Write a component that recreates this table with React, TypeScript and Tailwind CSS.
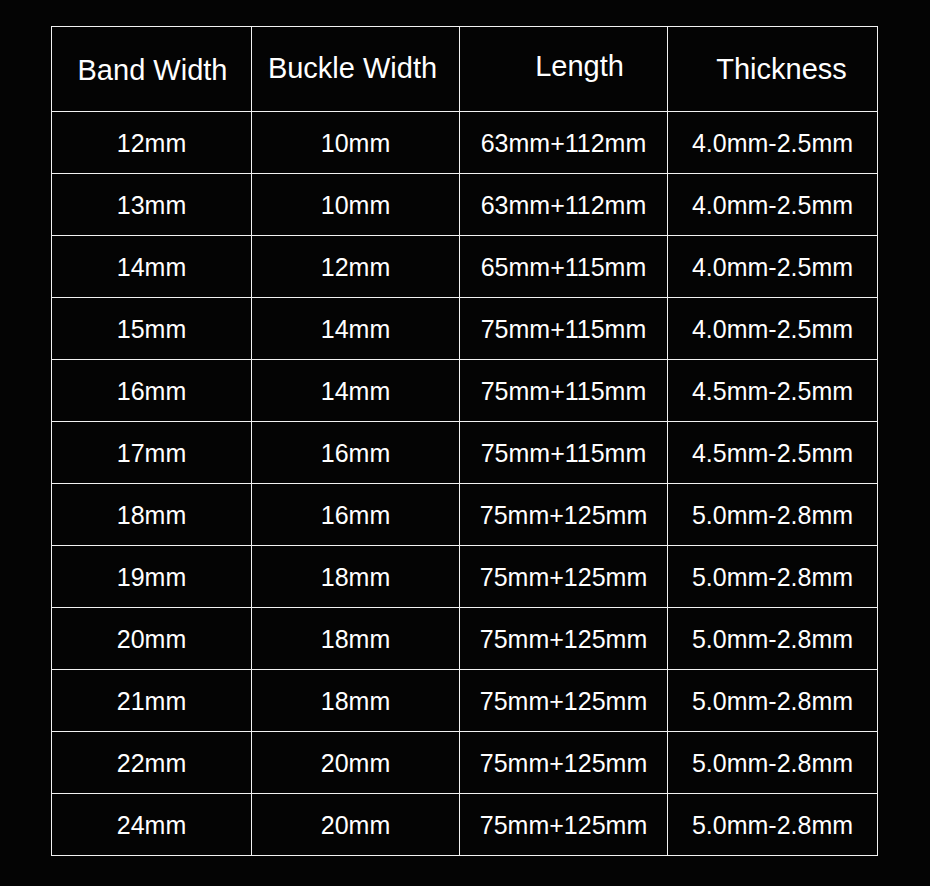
import React from "react";

const rows: [string, string, string, string][] = [
  ["12mm", "10mm", "63mm+112mm", "4.0mm-2.5mm"],
  ["13mm", "10mm", "63mm+112mm", "4.0mm-2.5mm"],
  ["14mm", "12mm", "65mm+115mm", "4.0mm-2.5mm"],
  ["15mm", "14mm", "75mm+115mm", "4.0mm-2.5mm"],
  ["16mm", "14mm", "75mm+115mm", "4.5mm-2.5mm"],
  ["17mm", "16mm", "75mm+115mm", "4.5mm-2.5mm"],
  ["18mm", "16mm", "75mm+125mm", "5.0mm-2.8mm"],
  ["19mm", "18mm", "75mm+125mm", "5.0mm-2.8mm"],
  ["20mm", "18mm", "75mm+125mm", "5.0mm-2.8mm"],
  ["21mm", "18mm", "75mm+125mm", "5.0mm-2.8mm"],
  ["22mm", "20mm", "75mm+125mm", "5.0mm-2.8mm"],
  ["24mm", "20mm", "75mm+125mm", "5.0mm-2.8mm"],
];

const headerCell =
  "h-[85px] flex items-center justify-center border-r border-b border-[#f2f2f2] text-[29px] text-white";
const dataCell =
  "h-[62px] flex items-center justify-center border-r border-b border-[#f2f2f2] text-[25px] text-white";

export default function App() {
  return (
    <div
      className="w-[930px] h-[886px] bg-[#040404] pt-[26px] pl-[51px]"
      style={{ fontFamily: '"Liberation Sans", Arial, sans-serif' }}
    >
      <div className="grid grid-cols-[200px_208px_208px_210px] w-[827px] border-l border-t border-[#f2f2f2]">
        <div className={`${headerCell} pl-[2px] pt-[3px]`}>Band Width</div>
        <div className={`${headerCell} pr-[6px]`}>Buckle Width</div>
        <div className={`${headerCell} pl-[32px] pb-[4px]`}>Length</div>
        <div className={`${headerCell} pl-[18px] pt-[2px]`}>Thickness</div>
        {rows.map((r, i) => (
          <React.Fragment key={i}>
            {r.map((c, j) => (
              <div key={j} className={`${dataCell} pt-[3px]`}>
                {c}
              </div>
            ))}
          </React.Fragment>
        ))}
      </div>
    </div>
  );
}
